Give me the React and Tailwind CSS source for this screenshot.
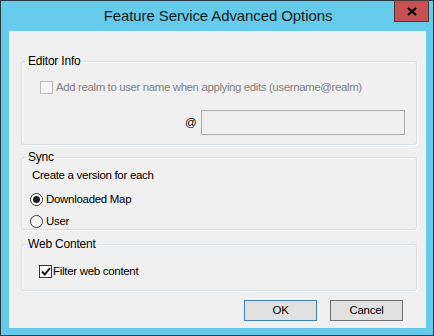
import React from "react";

const font = { fontFamily: '"Segoe UI", "Liberation Sans", Arial, sans-serif' };

function Group({ title, className, children }) {
  return (
    <fieldset
      className={
        "border border-[#d5dfe5] rounded-[3px] shadow-[inset_1px_1px_0_#ffffff,1px_1px_0_#ffffff] w-[396px] " +
        className
      }
    >
      <legend className="ml-[5px] px-[1px] text-[12px] leading-[15px] text-black tracking-[-0.2px]">{title}</legend>
      {children}
    </fieldset>
  );
}

function Radio({ checked }) {
  return (
    <span className="w-[13px] h-[13px] rounded-full border border-[#333333] bg-white flex items-center justify-center shrink-0">
      {checked && <span className="w-[7px] h-[7px] rounded-full bg-[#1a1a1a]" />}
    </span>
  );
}

export default function App() {
  return (
    <div
      className="w-[434px] h-[336px] bg-[#66cbea] border border-[#2a3a44] flex flex-col text-[11.5px] text-black tracking-[-0.3px]"
      style={font}
    >
      <div className="h-[30px] relative flex items-center justify-center">
        <span className="text-[15px] text-[#1a1a1a] pt-[1px] pl-[2px] tracking-[-0.1px]">Feature Service Advanced Options</span>
        <div className="absolute right-[4px] top-[-1px] w-[35px] h-[22px] bg-[#c75050] border border-[#4a3a3a] flex items-center justify-center">
          <svg width="10" height="9" viewBox="0 0 10 9">
            <path d="M1 1 L9 8 M9 1 L1 8" stroke="#000" strokeWidth="2.2" />
          </svg>
        </div>
      </div>
      <div className="ml-[8px] mr-[7px] h-[297px] bg-[#f0f0f0] flex flex-col px-[12px] pt-[23px]">
        <Group title="Editor Info" className="h-[91px]">
          <div className="flex flex-col pl-[18px] pt-[11px]">
            <div className="flex items-center gap-[3px] text-[#838383]">
              <span className="w-[13px] h-[13px] border border-[#bcbcbc] bg-[#f4f4f4] shrink-0" />
              <span className="leading-[15px] tracking-[-0.4px]">Add realm to user name when applying edits (username@realm)</span>
            </div>
            <div className="flex items-center mt-[15px] pl-[145px]">
              <span className="w-[16px]">@</span>
              <div className="w-[204px] h-[25px] border border-[#abadb3] bg-[#f0f0f0]" />
            </div>
          </div>
        </Group>
        <Group title="Sync" className="mt-[5px] h-[80px]">
          <div className="flex flex-col items-start">
            <div className="flex items-center mt-[3px] ml-[10px]">
              <span className="leading-[15px]">Create a version for each</span>
            </div>
            <div className="flex items-center gap-[3px] mt-[9px] ml-[8px]">
              <Radio checked />
              <span className="leading-[15px]">Downloaded Map</span>
            </div>
            <div className="flex items-center gap-[3px] mt-[7px] ml-[8px]">
              <Radio />
              <span className="leading-[15px]">User</span>
            </div>
          </div>
        </Group>
        <Group title="Web Content" className="mt-[7px] h-[54px]">
          <div className="flex flex-col pl-[17px] pt-[12px]">
            <div className="flex items-center gap-[1px]">
              <span className="w-[13px] h-[13px] border border-[#333333] bg-white flex items-center justify-center shrink-0">
                <svg width="10" height="9" viewBox="0 0 10 9">
                  <path d="M1 4.5 L3.8 7.5 L9 1" fill="none" stroke="#111" strokeWidth="2" />
                </svg>
              </span>
              <span className="leading-[15px]">Filter web content</span>
            </div>
          </div>
        </Group>
        <div className="flex justify-end gap-[13px] mt-[9px] pr-[11px]">
          <button className="w-[73px] h-[21px] bg-[#e1e1e1] border border-[#3c7fb1] leading-none">OK</button>
          <button className="w-[73px] h-[21px] bg-[#e1e1e1] border border-[#707070] leading-none">Cancel</button>
        </div>
      </div>
      <div className="flex-1" />
    </div>
  );
}
